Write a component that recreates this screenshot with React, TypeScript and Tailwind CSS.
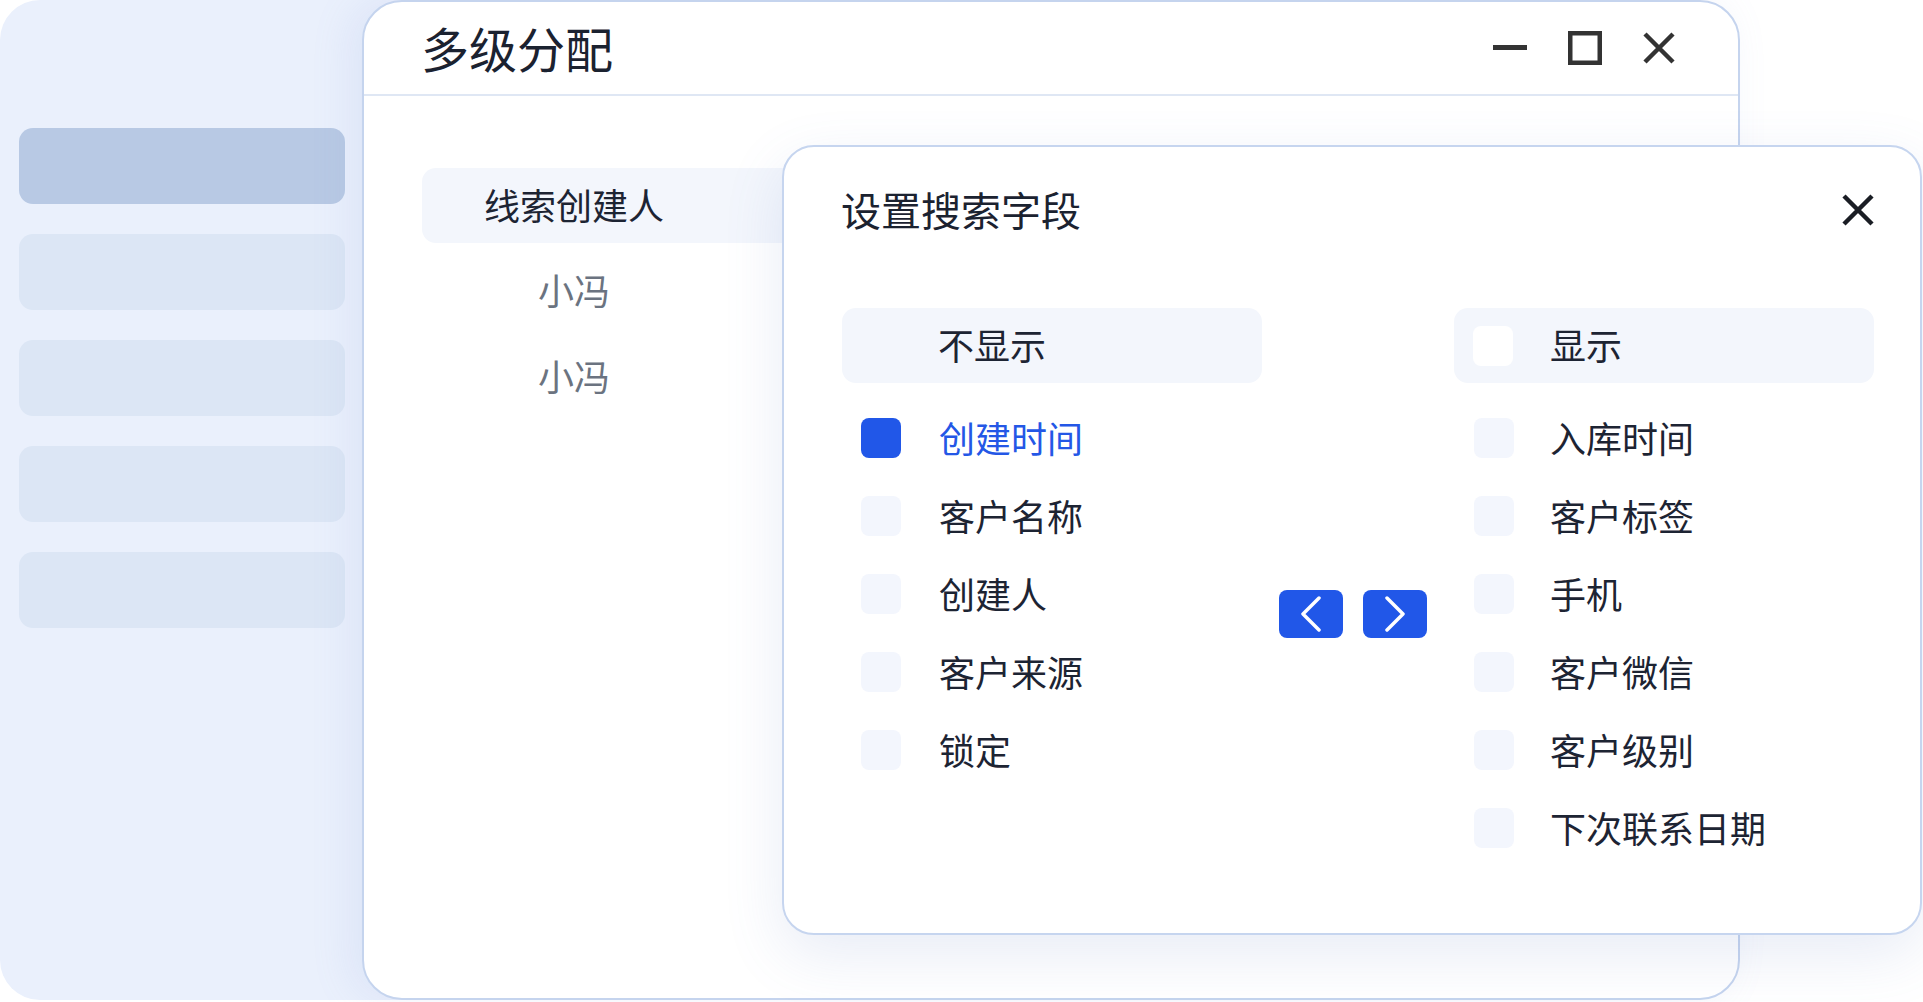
import React from "react";

const leftFields = ["创建时间", "客户名称", "创建人", "客户来源", "锁定"];
const rightFields = ["入库时间", "客户标签", "手机", "客户微信", "客户级别", "下次联系日期"];

function Check({ on }: { on?: boolean }) {
  return (
    <div
      className={
        on
          ? "w-[40px] h-[40px] rounded-[8px] bg-[#2157e8] shrink-0"
          : "w-[40px] h-[40px] rounded-[8px] bg-[#f3f6fd] shrink-0"
      }
    />
  );
}

export default function App() {
  return (
    <div className="relative w-[1923px] h-[1002px] overflow-hidden bg-white font-['Noto_Sans_CJK_SC','Noto_Sans',sans-serif]">
      {/* Sidebar panel */}
      <div className="absolute left-0 top-0 w-[420px] h-[1000px] rounded-l-[40px] bg-[#eaf0fc]">
        <div className="flex flex-col gap-[30px] pl-[19px] pt-[128px]">
          <div className="w-[326px] h-[76px] rounded-[14px] bg-[#b8c9e4]" />
          <div className="w-[326px] h-[76px] rounded-[14px] bg-[#dce6f5]" />
          <div className="w-[326px] h-[76px] rounded-[14px] bg-[#dce6f5]" />
          <div className="w-[326px] h-[76px] rounded-[14px] bg-[#dce6f5]" />
          <div className="w-[326px] h-[76px] rounded-[14px] bg-[#dce6f5]" />
        </div>
      </div>

      {/* Main window */}
      <div className="absolute left-[362px] top-0 w-[1378px] h-[1000px] rounded-[40px] border-2 border-[#c5d4ee] bg-white shadow-[-12px_0_40px_rgba(120,150,210,0.12)] overflow-hidden">
        <div className="h-[94px] border-b-2 border-[#dfe7f4] flex items-center justify-between pl-[57px] pr-[63px]">
          <div className="text-[48px] leading-none text-[#1b2230] -mt-[2px]">多级分配</div>
          <div className="flex items-center gap-[41px]">
            <svg width="34" height="34" viewBox="0 0 34 34">
              <rect x="0" y="14" width="34" height="5" fill="#333333" />
            </svg>
            <svg width="34" height="34" viewBox="0 0 34 34">
              <rect x="2.25" y="2.25" width="29.5" height="29.5" fill="none" stroke="#333333" strokeWidth="4.5" />
            </svg>
            <svg width="32" height="32" viewBox="0 0 32 32">
              <path d="M2 2 L30 30 M30 2 L2 30" stroke="#333333" strokeWidth="4.5" strokeLinecap="butt" />
            </svg>
          </div>
        </div>
        <div className="flex flex-col pl-[58px] pt-[66px]">
          <div className="h-[86px] flex items-center">
            <div className="w-[420px] h-[75px] rounded-[14px] bg-[#f3f6fc] flex items-center">
              <div className="w-[304px] text-center text-[36px] leading-none text-[#1d2433] -mt-[2px]">线索创建人</div>
            </div>
          </div>
          <div className="h-[86px] flex items-center">
            <div className="w-[304px] text-center text-[36px] leading-none text-[#6b7380] -mt-[4px]">小冯</div>
          </div>
          <div className="h-[86px] flex items-center">
            <div className="w-[304px] text-center text-[36px] leading-none text-[#6b7380] -mt-[4px]">小冯</div>
          </div>
        </div>
      </div>

      {/* Dialog */}
      <div className="absolute left-[782px] top-[145px] w-[1140px] h-[790px] rounded-[32px] border-2 border-[#c6d5ef] bg-white shadow-[0_20px_60px_rgba(90,120,190,0.14)]">
        <div className="flex items-start justify-between pl-[57px] pr-[46px] pt-[42px] h-[92px]">
          <div className="text-[40px] leading-none text-[#1b2230]">设置搜索字段</div>
          <svg width="32" height="32" viewBox="0 0 32 32" className="mt-[5px]">
            <path d="M2 2 L30 30 M30 2 L2 30" stroke="#1a1d24" strokeWidth="4.5" />
          </svg>
        </div>
        <div className="pl-[58px] pt-[69px] grid grid-cols-[420px_192px_420px]">
          <div className="h-[75px] rounded-[14px] bg-[#f3f6fc] flex items-center pl-[96px]">
            <span className="text-[36px] leading-none text-[#1d2433] -mt-[3px]">不显示</span>
          </div>
          <div />
          <div className="h-[75px] rounded-[14px] bg-[#f3f6fc] flex items-center pl-[19px]">
            <div className="w-[40px] h-[40px] rounded-[8px] bg-white" />
            <span className="ml-[37px] text-[36px] leading-none text-[#1d2433] -mt-[3px]">显示</span>
          </div>

          <div className="flex flex-col pt-[16px]">
            {leftFields.map((f, i) => (
              <div key={f} className="h-[78px] flex items-center pl-[19px]">
                <Check on={i === 0} />
                <span
                  className={
                    i === 0
                      ? "ml-[38px] text-[36px] leading-none text-[#2457e6] -mt-[3px]"
                      : "ml-[38px] text-[36px] leading-none text-[#1d2433] -mt-[3px]"
                  }
                >
                  {f}
                </span>
              </div>
            ))}
          </div>
          <div className="flex items-start gap-[20px] pl-[17px] pt-[207px]">
            <div className="w-[64px] h-[48px] rounded-[8px] bg-[#2157e8] flex items-center justify-center">
              <svg width="22" height="36" viewBox="0 0 22 36">
                <path d="M19 2 L3 18 L19 34" fill="none" stroke="white" strokeWidth="3.5" strokeLinecap="round" strokeLinejoin="round" />
              </svg>
            </div>
            <div className="w-[64px] h-[48px] rounded-[8px] bg-[#2157e8] flex items-center justify-center">
              <svg width="22" height="36" viewBox="0 0 22 36">
                <path d="M3 2 L19 18 L3 34" fill="none" stroke="white" strokeWidth="3.5" strokeLinecap="round" strokeLinejoin="round" />
              </svg>
            </div>
          </div>
          <div className="flex flex-col pt-[16px]">
            {rightFields.map((f) => (
              <div key={f} className="h-[78px] flex items-center pl-[20px]">
                <Check />
                <span className="ml-[36px] text-[36px] leading-none text-[#1d2433] -mt-[3px]">{f}</span>
              </div>
            ))}
          </div>
        </div>
      </div>
    </div>
  );
}
